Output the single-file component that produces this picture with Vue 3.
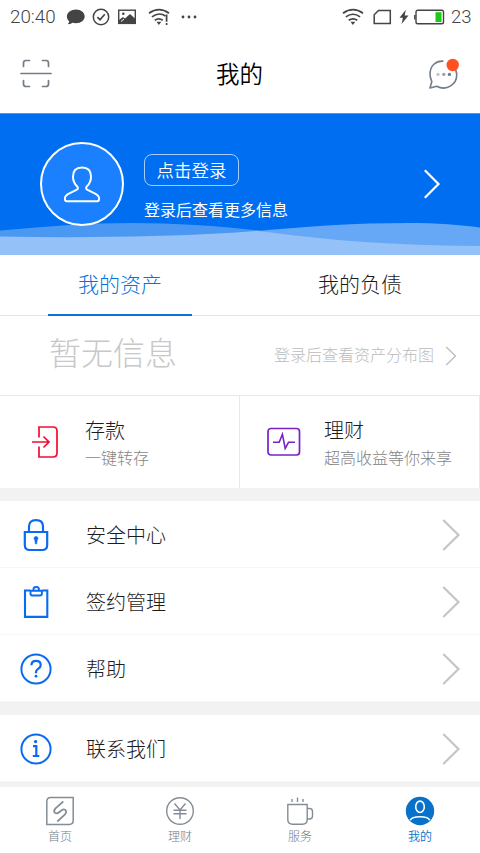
<script setup>
const rows = [
  { label: '安全中心', icon: 'lock' },
  { label: '签约管理', icon: 'clip' },
  { label: '帮助', icon: 'help' },
  { label: '联系我们', icon: 'info', gap: true },
]
</script>

<template>
  <div class="screen">
    <header class="status">
      <span class="time">20:40</span>
      <svg class="s-chat" width="20" height="18" viewBox="0 0 20 18"><path d="M10 1.500c5 0 8.700 3 8.700 6.800S15 15.300 10 15.300c-1.300 0-2.500-.2-3.600-.5-1.100 1-2.600 1.500-4.500 1.300.8-.8 1.200-1.800 1.300-2.900C1.600 12 .9 10.300.9 8.300.9 4.500 5 1.500 10 1.500z" fill="#444" /></svg>
      <svg class="s-check" width="18" height="18" viewBox="0 0 18 18" fill="none" stroke="#444"><circle cx="9" cy="9" r="7.700" stroke-width="1.500" /><path d="M5.400 9.200l2.600 2.500 4.800-5.400" stroke-width="1.700" /></svg>
      <svg class="s-image" width="18" height="16" viewBox="0 0 18 16"><rect x=".7" y="1.200" width="16.600" height="13.200" fill="none" stroke="#444" stroke-width="1.400" /><circle cx="5.300" cy="4.800" r="1.300" fill="#444" /><path d="M1 11l4-3 2 1.500L12 5l5.500 5v4.500H1z" fill="#444" /><path d="M3 12.500l3-2.500" stroke="#fff" stroke-width="1" /></svg>
      <svg class="s-wifi1" width="22" height="20" viewBox="0 0 22 20" fill="none" stroke="#444" stroke-width="1.700"><path d="M1 6.200Q11 -1 21 6.200M3.900 9.900Q11 4.600 17.500 9M6.700 13.300q4.300-2.800 8 0" /><path d="M8.500 14.800h4.800L10.900 18z" fill="#444" stroke="none" /><path d="M18.600 7.500v7.200M18.600 16v2" /></svg>
      <svg class="s-dots" width="16" height="4" viewBox="0 0 16 4" fill="#444"><circle cx="2" cy="2" r="1.400" /><circle cx="8" cy="2" r="1.400" /><circle cx="14" cy="2" r="1.400" /></svg>
      <svg class="s-wifi2" width="22" height="20" viewBox="0 0 22 20" fill="none" stroke="#444" stroke-width="1.700"><path d="M1 6.200Q11 -1 21 6.200M3.900 9.900Q11 4.600 18.100 9.900M6.700 13.300q4.300-2.800 8.600 0" /><path d="M8.500 14.800h4.800L10.900 18z" fill="#444" stroke="none" /></svg>
      <svg class="s-sim" width="19" height="16" viewBox="0 0 19 16" fill="none" stroke="#444" stroke-width="1.500"><path d="M5.500 1.500h11.800v13H1.200V5.800z" /></svg>
      <svg class="s-bolt" width="10" height="16" viewBox="0 0 10 16"><path d="M6.800.8L.5 8.800h3.400L2.600 15 9.500 6.500H5.700z" fill="#444" /></svg>
      <svg class="s-battery" width="31" height="16" viewBox="0 0 31 16"><rect x="2" y="1.200" width="27.500" height="13.600" rx="1.800" fill="none" stroke="#444" stroke-width="1.400" /><path d="M.7 6v4.500" stroke="#444" stroke-width="1.300" /><rect x="21.500" y="3.200" width="6" height="9.800" fill="#1bc916" /></svg>
      <span class="level">23</span>
    </header>

    <div class="title-bar">
      <svg width="32" height="30" viewBox="0 0 32 30" fill="none" stroke="#737d87" stroke-width="1.700" stroke-linecap="round"><path d="M3.500 7.500V4q0-2.500 2.500-2.500h3.500M22.500 1.500H26q2.500 0 2.500 2.500v3.500M3.500 21.500V25q0 2.500 2.500 2.500h3.500M22.500 27.500H26q2.500 0 2.500-2.500v-3.500M1 14.500h30" /></svg>
      <h1>我的</h1>
      <svg class="message" width="32" height="34" viewBox="0 0 32 34"><path d="M16.500 4.200C9 3.500 3 8.700 3 17.200c0 2.700.8 5 1.800 7.300L3 31l6.700-1.700C20 34.500 30 27 29.700 17.500c-.1-2-.5-3.500-1.300-5" fill="none" stroke="#737d87" stroke-width="1.600" stroke-linejoin="round" /><circle cx="11" cy="17.400" r="1.700" fill="#c3c7cb" /><circle cx="16.800" cy="17.400" r="1.700" fill="#9da3a9" /><circle cx="22.400" cy="17.400" r="1.700" fill="#737d87" /><circle cx="25.700" cy="8" r="6.200" fill="#ff5122" /></svg>
    </div>

    <section class="banner">
      <svg class="waves" width="480" height="32" viewBox="0 0 480 32">
        <path d="M0 7.500C50 3 90 0 132 0c70 0 135 8 190 15 55 6 100 8.500 158 8.500V32H0z" fill="#4b98f2" />
        <path d="M240 9.500C300 4 350 0 408 0c30 0 52 2 72 4.500V32H240z" fill="#66a7f6" />
        <path d="M0 13.500C80 15 160 14 232 9.800l25-2C320 16 380 22.500 480 23V32H0z" fill="#93c1f8" />
      </svg>
      <svg class="avatar" width="84" height="84" viewBox="0 0 84 84" fill="none" stroke="#fff"><circle cx="42" cy="42" r="41" fill="#1a80ff" stroke-width="2" /><path d="M42 25.500c-6 0-9 3.500-9 9.200 0 4.300 1.700 7.300 4.200 9.800 1.300 1.400.7 2.700-.8 3.400l-7 3.400c-3 1.400-4.500 2.500-4.500 5v.5c0 1.700.7 2.500 2 2.500h30.200c1.300 0 2-.8 2-2.500v-.5c0-2.500-1.500-3.600-4.500-5l-7-3.400c-1.500-.7-2.100-2-.8-3.400 2.500-2.500 4.200-5.500 4.200-9.800 0-5.700-3-9.200-9-9.200z" stroke-width="2" /></svg>
      <div class="login">
        <button>点击登录</button>
        <p>登录后查看更多信息</p>
      </div>
      <svg class="go" width="18" height="30" viewBox="0 0 18 30"><path d="M1.800 1.300L15.500 15 1.800 28.700" fill="none" stroke="#fff" stroke-width="2.200" /></svg>
    </section>

    <nav class="tabs">
      <div class="tab"><span class="active">我的资产</span></div>
      <div class="tab"><span>我的负债</span></div>
    </nav>

    <section class="summary">
      <strong>暂无信息</strong>
      <span>登录后查看资产分布图</span>
      <svg width="12" height="20" viewBox="0 0 12 20"><path d="M1.200 1L10.500 10 1.200 19" fill="none" stroke="#bcbcbc" stroke-width="1.300" /></svg>
    </section>

    <section class="cards">
      <div class="card">
        <svg width="34" height="34" viewBox="0 0 34 34" fill="none" stroke="#f30b32" stroke-width="1.700"><path d="M8 12.500V2h14q4 0 4 4v22q0 4-4 4H8V21.500M1 17h16.500M12.500 11.500L18 17l-5.500 5.500" /></svg>
        <div><h2>存款</h2><p>一键转存</p></div>
      </div>
      <div class="card second">
        <svg width="34" height="34" viewBox="0 0 34 34" fill="none" stroke="#7622c6" stroke-width="1.700"><rect x="1" y="3.500" width="31.500" height="26.500" rx="3" /><path d="M6 17.300h6.200l3.200-8 2.800 14.200 3.300-6.200H28" stroke-width="1.600" /></svg>
        <div><h2>理财</h2><p>超高收益等你来享</p></div>
      </div>
    </section>

    <ul class="list">
      <li v-for="row in rows" :key="row.label" :class="{ gap: row.gap }">
        <svg v-if="row.icon === 'lock'" width="34" height="34" viewBox="0 0 34 34" fill="none" stroke="#096bf1" stroke-width="2.200"><path d="M5.800 14h22.400v13q0 5-5 5H10.800q-5 0-5-5zM10 14V8.500q0-6.300 7-6.300t7 6.300V14" /><path d="M17 18.500a2 2 0 0 1 1.200 3.600L17.600 26h-1.200l-.6-3.900A2 2 0 0 1 17 18.500z" fill="#096bf1" stroke="#096bf1" stroke-width=".6" /></svg>
        <svg v-else-if="row.icon === 'clip'" width="34" height="34" viewBox="0 0 34 34" fill="none" stroke="#096bf1" stroke-width="2.100"><path d="M11 5.500H6v26.400h22.300V5.500h-5" /><path d="M11.500 5.800h11.400v2.700q0 2-2 2h-7.400q-2 0-2-2zM14.500 5.500V4q0-2 2.700-2t2.700 2v1.500" stroke-width="1.900" /></svg>
        <svg v-else-if="row.icon === 'help'" width="34" height="34" viewBox="0 0 34 34" fill="none" stroke="#096bf1" stroke-width="2"><circle cx="17" cy="17" r="14.600" /><path d="M12.400 13.200q.2-4.400 4.700-4.400 4.600 0 4.600 4.200 0 2.200-2.300 3.700T17 20v1.300" stroke-width="2.200" /><circle cx="17" cy="24.200" r="1.400" fill="#096bf1" stroke="none" /></svg>
        <svg v-else width="34" height="34" viewBox="0 0 34 34" fill="none" stroke="#096bf1" stroke-width="2"><circle cx="17" cy="17" r="14.600" /><path d="M14 14.200h3.300v9.300M13.800 24h6.500" stroke-width="2.200" /><circle cx="16.600" cy="9.600" r="1.700" fill="#096bf1" stroke="none" /></svg>
        <span>{{ row.label }}</span>
        <svg class="chev" width="20" height="34" viewBox="0 0 20 34"><path d="M2.300 2L17.500 17 2.300 32" fill="none" stroke="#c5c5c5" stroke-width="2.200" /></svg>
      </li>
    </ul>

    <footer class="dock">
      <div class="item">
        <svg width="30" height="30" viewBox="0 0 30 30" fill="none" stroke="#848d95" stroke-width="1.500"><path d="M1.800 28.400V5.500q0-4 4-4h22.400v23q0 3.900-4 3.900z" /><path d="M18.300 5.500l-7.800 6.800Q8 15 10 17q2 1 4.500-1l2.500-2q2.500-1.500 3.800.5 1 2.200-1.300 4.500l-7.200 6.500" stroke-width="1.700" /></svg>
        <span>首页</span>
      </div>
      <div class="item">
        <svg width="30" height="30" viewBox="0 0 30 30" fill="none" stroke="#848d95" stroke-width="1.400"><circle cx="15" cy="15" r="13.300" /><path d="M9.500 7.500L15 14l5.500-6.500M8.500 14.300h13M8.500 17.700h13M15 14v9" /></svg>
        <span>理财</span>
      </div>
      <div class="item">
        <svg width="30" height="30" viewBox="0 0 30 30" fill="none" stroke="#848d95" stroke-width="1.400"><path d="M2.800 8.500h19.400v15q0 4.700-4.700 4.700h-10q-4.700 0-4.700-4.700zM22.200 12.500h2.300q3 0 3 3V20q0 3-3 3h-2.300M7 3v3M12.500 1.500V6M18 3v3" /></svg>
        <span>服务</span>
      </div>
      <div class="item on">
        <svg width="30" height="30" viewBox="0 0 30 30" fill="none" stroke="#fff" stroke-width="1.600"><circle cx="15" cy="15" r="14.200" fill="#0871c9" stroke="none" /><ellipse cx="15" cy="10.800" rx="4.300" ry="5.700" /><path d="M5.200 24.300q1.500-3.600 9.800-3.600t9.800 3.600" /></svg>
        <span>我的</span>
      </div>
    </footer>
  </div>
</template>

<style>
body { margin: 0; background: #fff; }
</style>

<style scoped>
.screen { width: 480px; height: 853px; overflow: hidden; background: #fff; font-family: Roboto, "Noto Sans CJK SC", sans-serif; font-weight: 300; color: #1c1c1c; }
.screen * { box-sizing: border-box; }
svg { display: block; flex: none; }
h1, h2, p, ul { margin: 0; padding: 0; font-weight: 300; }
.status { height: 34px; display: flex; align-items: center; color: #444; font-weight: 400; }
.time { width: 55px; padding-left: 10px; font-size: 18.800px; line-height: 34px; white-space: nowrap; font-weight: 350; }
.s-chat { margin-left: 11px; }
.s-check { margin-left: 6px; }
.s-image { margin-left: 8px; }
.s-wifi1 { margin-left: 12px; }
.s-dots { margin-left: 11px; }
.s-wifi2 { margin-left: 145px; }
.s-sim { margin-left: 9px; }
.s-bolt { margin-left: 7px; }
.s-battery { margin-left: 5px; }
.level { margin-left: 6px; font-size: 18.500px; font-weight: 350; }
.title-bar { height: 79px; padding: 0 20px; display: flex; align-items: center; justify-content: space-between; }
.message { margin-right: 1px; }
h1 { color: #000; font-size: 23.500px; line-height: 32px; padding-top: 2px; font-weight: 350; }
.banner { position: relative; height: 142px; padding: 0 39px 2px 40px; display: flex; align-items: center; background: #006ef0; border-top: 1px solid #4c97ee; }
.waves { position: absolute; left: 0; bottom: 0; }
.avatar { position: relative; }
.login { position: relative; margin-left: 20px; padding-top: 9px; flex: 1; color: #fff; }
.login button { display: block; width: 95px; height: 32px; padding: 0; border: 1px solid #a5ceff; border-radius: 8px; background: none; color: #fff; font: 350 17.500px/30px "Noto Sans CJK SC", sans-serif; }
.login p { margin-top: 13px; font-size: 16px; line-height: 24px; font-weight: 400; }
.go { position: relative; }
.tabs { height: 61px; display: flex; border-bottom: 1px solid #e4e4e4; }
.tab { flex: 1; display: flex; justify-content: center; }
.tab span { width: 144px; height: 61px; text-align: center; font-size: 21px; line-height: 61px; }
.tab .active { color: #0871dc; border-bottom: 2px solid #0871dc; }
.summary { height: 79px; display: flex; align-items: center; padding: 0 23px 0 49px; color: #bcbcbc; }
.summary strong { flex: 1; font-size: 32px; line-height: 40px; padding-bottom: 4px; font-weight: 300; color: #c8c8c8; }
.summary span { font-size: 16px; padding-bottom: 4px; margin-right: 11px; }
.cards { height: 93px; display: flex; border-top: 1px solid #e8e8e8; }
.card { width: 240px; display: flex; align-items: center; padding-left: 31px; border-right: 1px solid #e8e8e8; }
.card svg { margin-right: 20px; }
.card div { padding-top: 5px; }
.second { padding-left: 27px; }
.second svg { margin-right: 23px; }
h2 { font-size: 20px; line-height: 28px; }
.card p { font-size: 16px; line-height: 27px; color: #858585; white-space: nowrap; }
.list { list-style: none; padding-top: 13px; background: #f2f2f2; padding-bottom: 5px; }
.list li { height: 67px; display: flex; align-items: center; padding: 1px 19px 0; background: #fff; font-size: 20px; border-bottom: 1px solid #f7f7f7; }
.list li.gap { margin-top: 13px; }
.list li span { flex: 1; margin-left: 33px; }
.dock { height: 66px; display: flex; }
.item { flex: 1; display: flex; flex-direction: column; align-items: center; padding-top: 9px; font-size: 12px; line-height: 22px; color: #737d87; }
.item.on { color: #0871c9; font-weight: 350; }
</style>
